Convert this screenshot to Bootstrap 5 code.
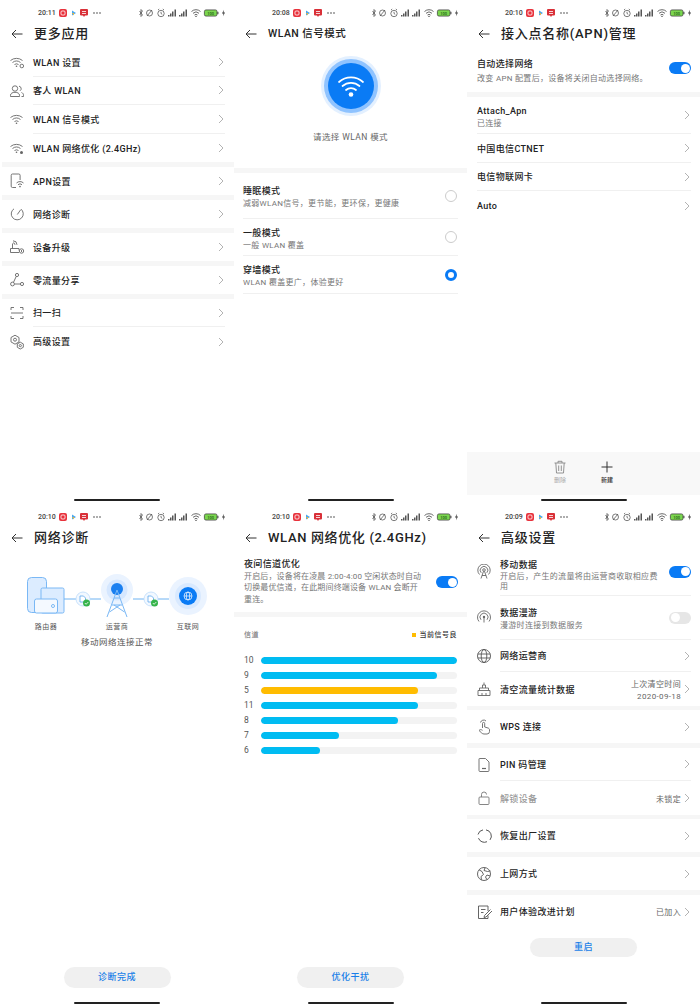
<!DOCTYPE html>
<html lang="zh-CN">
<head>
  <meta charset="UTF-8">
  <meta name="viewport" content="width=device-width, initial-scale=1">
  <title>路由器设置截图</title>
  <link href="https://cdn.jsdelivr.net/npm/bootstrap@5.3.0/dist/css/bootstrap.min.css" rel="stylesheet">
  <style>
    html, body {
      margin: 0;
      background: #fff;
      overflow: hidden;
    }
    body {
      font-family: Roboto, "Noto Sans CJK SC", sans-serif;
      color: #222;
    }
    .wall {
      display: grid;
      grid-template-columns: 234px 233px 233px;
      grid-template-rows: 504px 503px;
      width: 700px;
    }
    .screen {
      display: flex;
      flex-direction: column;
      min-width: 0;
      overflow: hidden;
      background: #fff;
    }
    /* status bar */
    .status-strip {
      display: flex;
      align-items: center;
      flex: none;
      height: 24px;
      padding: 2px 7px 0 38px;
      font-size: 7px;
      font-weight: 500;
      color: #444;
    }
    .st-left { width: 45px; height: 10px; margin-left: 3px; }
    .st-right { width: 90px; height: 10px; margin-left: auto; }
    /* header */
    .head-strip {
      display: flex;
      align-items: center;
      flex: none;
      height: 20px;
      padding-left: 11px;
    }
    .back-ico { width: 12px; height: 10px; margin-right: 11px; flex: none; }
    .head-title {
      font-size: 13px;
      font-weight: 500;
      letter-spacing: .75px;
      line-height: 20px;
      white-space: nowrap;
    }
    .head-small { font-size: 10.5px; letter-spacing: .45px; }
    .head-mid { font-size: 13px; letter-spacing: .65px; }
    /* rows */
    .gap-band { flex: none; height: 5px; background: #f6f6f6; }
    .gap-thin { height: 4px; }
    .gap-band-first { margin-left: 2px; }
    .tool-row {
      display: flex;
      align-items: center;
      flex: none;
      height: 28px;
      font-size: 9px;
      letter-spacing: .35px;
      font-weight: 500;
    }
    .tool-ico { width: 16px; height: 16px; margin: 0 8px 0 9px; flex: none; }
    .tool-body {
      display: flex;
      align-items: center;
      flex: 1;
      height: 100%;
      min-width: 0;
      margin-right: 9px;
      padding-top: 3px;
    }
    .tool-line { border-bottom: 1px solid #f0f0f0; }
    .tool-plain .tool-body { margin-left: 10px; }
    .mode-row .tool-body { margin-left: 9px; }
    .chev { width: 6px; height: 10px; margin-left: auto; margin-right: 1px; margin-top: -3px; flex: none; }
    .tool-note {
      margin-left: auto;
      margin-right: 3px;
      font-size: 8px;
      font-weight: 400;
      color: #666;
      text-align: right;
      line-height: 12px;
    }
    .tool-note + .chev { margin-left: 0; }
    .off-text { color: #999; }
    .sub-text {
      font-size: 8px;
      font-weight: 400;
      letter-spacing: .3px;
      line-height: 11px;
      color: #777;
    }
    .sub-night { letter-spacing: .15px; line-height: 11.5px; }
    .sub-drop { margin-top: 2px; }
    .text-drop { margin-top: 3px; }
    .text-drop-more { margin-top: 5px; }
    .sub-tight { line-height: 10px; }
    .name-text { line-height: 13px; }
    .h-28-5 { height: 28.5px; }
    .h-29 { height: 29px; }
    .h-32 { height: 32px; }
    .h-33 { height: 33px; }
    .h-34 { height: 34px; }
    .h-37 { height: 37px; }
    .h-38 { height: 38px; }
    .h-44 { height: 44px; }
    .h-46 { height: 46px; }
    .h-48 { height: 48px; }
    .h-64 { height: 64px; }
    .mt-4px { margin-top: 4px; }
    /* switches and radios */
    .mini-switch {
      position: relative;
      display: block;
      flex: none;
      width: 22px;
      height: 12px;
      margin-left: auto;
      margin-top: -3px;
      border-radius: 6px;
      background: #0a7bf5;
    }
    .mini-switch::after {
      content: "";
      position: absolute;
      top: 1.5px;
      right: 1.5px;
      width: 9px;
      height: 9px;
      border-radius: 50%;
      background: #fff;
    }
    .mini-switch.is-off { background: #e6e6e6; }
    .mini-switch.is-off::after { right: auto; left: 1.5px; }
    .switch-low { margin-top: 1px; }
    .mini-radio {
      display: block;
      flex: none;
      width: 12px;
      height: 12px;
      margin-left: auto;
      margin-right: 1px;
      margin-top: -3px;
      border: 1px solid #ccc;
      border-radius: 50%;
    }
    .mini-radio.is-on { border: 3px solid #0a7bf5; }
    /* wlan mode */
    .mode-hero { width: 60px; height: 60px; margin: 12px auto 0; flex: none; }
    .mode-hint {
      margin: 15px 0 25px;
      font-size: 8.5px;
      line-height: 12px;
      letter-spacing: .4px;
      text-align: center;
      color: #666;
    }
    /* diagnosis */
    .diag-art { display: block; width: 233px; height: 50px; margin-top: 22px; flex: none; }
    .diag-labels {
      display: flex;
      justify-content: center;
      margin-top: 1px;
      font-size: 7px;
      line-height: 12px;
      letter-spacing: .5px;
      color: #555;
      text-align: center;
    }
    .diag-labels span { width: 71px; }
    .diag-state {
      margin-top: 3px;
      font-size: 8.5px;
      line-height: 12px;
      letter-spacing: .5px;
      text-align: center;
      color: #555;
    }
    /* channel chart */
    .chart-top {
      display: flex;
      align-items: center;
      justify-content: space-between;
      height: 12px;
      margin: 12px 10px 11.5px;
      font-size: 7px;
      letter-spacing: .5px;
      color: #666;
    }
    .legend-dot { display: inline-block; width: 4px; height: 4px; margin-right: 4px; background: #ffbc00; }
    .legend-name { color: #333; font-weight: 500; }
    .chan-row { display: flex; align-items: center; height: 15px; padding: 0 10px; font-size: 8.5px; color: #555; }
    .chan-num { flex: none; width: 17px; }
    .chan-track { flex: 1; height: 7px; border-radius: 4px; background: #f3f3f3; }
    .chan-fill { border-radius: 4px; background: #00bcf2; }
    .chan-fill.is-now { background: #ffbc00; }
    /* bottom bits */
    .pill-btn {
      display: block;
      flex: none;
      width: 107px;
      height: 21px;
      margin: auto auto 0;
      padding: 0;
      border: 0;
      background: #f0f0f0;
      color: #1a7fe8;
      font-size: 9px;
      font-weight: 500;
      letter-spacing: .5px;
      line-height: 21px;
    }
    .pill-btn-gap { margin-bottom: 14px; }
    .pill-btn-short { height: 19px; line-height: 19px; margin-top: 10px; margin-bottom: auto; }
    .home-bar {
      flex: none;
      width: 86px;
      height: 2px;
      margin: 0 auto 3px;
      border-radius: 1px;
      background: #222;
    }
    .home-bar-end { margin-top: auto; }
    .apn-tools {
      display: flex;
      justify-content: center;
      flex: none;
      gap: 33px;
      height: 43px;
      margin-top: auto;
      margin-bottom: 4px;
      padding-top: 8px;
      background: #f8f8f8;
      font-size: 6px;
      line-height: 9px;
      text-align: center;
      color: #aaa;
    }
    .apn-tools svg { display: block; width: 14px; height: 14px; margin: 0 auto 1px; }
    .apn-new { color: #333; font-weight: 500; }
  </style>
</head>
<body>
  <!-- shared icons -->
  <svg class="d-none" xmlns="http://www.w3.org/2000/svg">
    <symbol id="st-l" viewBox="0 0 45 10">
      <rect x="0" y="1" width="8" height="8" rx="2" fill="#e8323c"/>
      <rect x="2" y="3" width="4" height="4" rx="1" fill="none" stroke="#fff" stroke-width=".8"/>
      <path d="M13 2.5v5l4-2.5z" fill="#4aa8ee"/>
      <path d="M13 5h2v2.5z" fill="#f2b632"/>
      <path d="M22 1h6a1 1 0 0 1 1 1v4.500a1 1 0 0 1-1 1h-2l-1 1.500-1-1.500h-2a1 1 0 0 1-1-1V2a1 1 0 0 1 1-1z" fill="#d93038"/>
      <path d="M23 3.500h4M23 5.500h4" stroke="#fff" stroke-width=".8"/>
      <circle cx="35" cy="5" r=".8" fill="#444"/><circle cx="38" cy="5" r=".8" fill="#444"/><circle cx="41" cy="5" r=".8" fill="#444"/>
    </symbol>
    <symbol id="st-r" viewBox="0 0 90 10">
      <g fill="none" stroke="#444" stroke-width=".7">
        <path d="M2.500 3l3 4-1.500 1.500V1.500L5.500 3l-3 4"/>
        <circle cx="12.500" cy="5" r="3"/><path d="M10 8l5-6"/>
        <circle cx="24" cy="5.500" r="3.200"/><path d="M24 3.800v1.700l1.200.8M21 2l1.200-1M27 2l-1.200-1"/>
      </g>
      <path d="M31 8.500h1.500V7H31zM33 8.500h1.500V5.500H33zM35 8.500h1.500V3.500H35zM37.500 8.500H39V1.500h-1.500z" fill="#555"/>
      <path d="M42 8.500h1.500V7H42zM44 8.500h1.500V5.500H44zM46 8.500h1.500V3.500H46zM48.500 8.500H50V1.500h-1.500z" fill="#555"/>
      <g fill="none" stroke="#444" stroke-width=".8">
        <path d="M54.500 3.500a6.500 6.500 0 0 1 9 0M56 5.300a4.300 4.300 0 0 1 6 0M57.500 7a2.200 2.200 0 0 1 3 0"/>
      </g>
      <circle cx="59" cy="8.400" r=".7" fill="#444"/>
      <rect x="67.400" y="1.900" width="12.600" height="6.200" rx="1.600" fill="#7bd64f" stroke="#333" stroke-width=".7"/>
      <rect x="80.400" y="3.800" width="1" height="2.400" fill="#333"/>
      <text x="73.700" y="6.500" font-size="4" text-anchor="middle" fill="#1d5a12" font-family="Roboto, sans-serif">100</text>
      <path d="M87 1.800l-2 3.600h1.500l-.5 2.800 2-3.600h-1.500z" fill="#333"/>
    </symbol>
    <symbol id="i-back" viewBox="0 0 12 10">
      <path d="M11.500 5H1M5 1L1 5l4 4" fill="none" stroke="#333" stroke-width="1"/>
    </symbol>
    <symbol id="i-chev" viewBox="0 0 6 10">
      <path d="M1 1l4 4-4 4" fill="none" stroke="#aaa" stroke-width=".9"/>
    </symbol>
    <g id="wifi-arcs" fill="none" stroke="#666" stroke-width=".9">
      <path d="M1.500 6.500a9.500 9.500 0 0 1 12 0M3.500 8.500a6.500 6.500 0 0 1 8 0M5.500 10.500a3.500 3.500 0 0 1 4 0"/>
    </g>
    <symbol id="i-wifi-gear" viewBox="0 0 16 16">
      <use href="#wifi-arcs"/><circle cx="7.500" cy="12.200" r=".8" fill="#666"/><circle cx="12.800" cy="12" r="1.800" fill="#fff" stroke="#666" stroke-width=".9"/>
    </symbol>
    <symbol id="i-people" viewBox="0 0 16 16">
      <g fill="none" stroke="#666" stroke-width=".9">
        <circle cx="6" cy="5.500" r="2.700"/><path d="M1.500 13.500v-1.200c0-2 2-3 4.500-3s4.500 1 4.500 3v1.200z"/>
        <path d="M10 3.200a2.500 2.500 0 0 1 1 4.600M12.500 9.500c1.300.5 2 1.400 2 2.800v1.200h-2"/>
      </g>
    </symbol>
    <symbol id="i-wifi" viewBox="0 0 16 16">
      <use href="#wifi-arcs"/><circle cx="7.500" cy="12.200" r=".8" fill="#666"/>
    </symbol>
    <symbol id="i-wifi-opt" viewBox="0 0 16 16">
      <use href="#wifi-arcs"/><circle cx="7.500" cy="12.200" r=".8" fill="#666"/><circle cx="12.500" cy="12.500" r="1.500" fill="#666"/>
    </symbol>
    <symbol id="i-apn" viewBox="0 0 16 16">
      <g fill="none" stroke="#666" stroke-width=".9">
        <path d="M7 14.500H3.500a1.300 1.300 0 0 1-1.300-1.300V2.300A1.300 1.300 0 0 1 3.500 1h6.300a1.300 1.300 0 0 1 1.300 1.300V7"/>
        <path d="M7.500 10a5 5 0 0 1 7 0M9 11.700a3 3 0 0 1 4 0"/>
      </g>
      <circle cx="11" cy="13.600" r=".8" fill="#666"/>
    </symbol>
    <symbol id="i-diag" viewBox="0 0 16 16">
      <path d="M5 2.800a6 6 0 1 0 6.800.2M8.300 8.500L11.500 4" fill="none" stroke="#666" stroke-width=".9"/>
    </symbol>
    <symbol id="i-upgrade" viewBox="0 0 16 16">
      <g fill="none" stroke="#666" stroke-width=".9">
        <path d="M10 11.500V9.500H1.500v4H10M3.500 9.500V4.500"/><path d="M4 1.800a4 4 0 0 1 4 4M4 3.800a2 2 0 0 1 2 2"/>
        <circle cx="12.500" cy="12" r="2.200"/><path d="M12.500 13V11"/>
      </g>
    </symbol>
    <symbol id="i-share" viewBox="0 0 16 16">
      <g fill="none" stroke="#666" stroke-width=".9">
        <circle cx="8" cy="3" r="1.600"/><circle cx="3.500" cy="12" r="1.900"/><circle cx="13" cy="12" r="1.600"/>
        <path d="M7.200 4.500L4.500 10.300M5.500 12h6"/>
      </g>
    </symbol>
    <symbol id="i-scan" viewBox="0 0 16 16">
      <path d="M2 5V2.500h3M11 2.500h3V5M2 11v2.500h3M11 13.500h3V11M2 8h12" fill="none" stroke="#666" stroke-width=".9"/>
    </symbol>
    <symbol id="i-gears" viewBox="0 0 16 16">
      <g fill="none" stroke="#666" stroke-width=".9">
        <path d="M6 1.200l4 2.300v4.400l-4 2.300-4-2.300V3.500z"/><circle cx="6" cy="5.700" r="1.500"/>
        <path d="M11.300 8.200l3 1.700v3.400l-3 1.700-3-1.700V9.900z"/><circle cx="11.300" cy="11.600" r="1.100"/>
      </g>
    </symbol>
    <symbol id="i-antenna" viewBox="0 0 16 16">
      <g fill="none" stroke="#666" stroke-width=".9">
        <path d="M3.500 10.500a6.200 6.200 0 1 1 9 0M5.200 8.800a3.800 3.800 0 1 1 5.600 0"/>
        <circle cx="8" cy="6" r="1.300"/><path d="M7.500 7.300L5 14.500M8.500 7.300l2.500 7.200M6 11.500h4"/>
      </g>
    </symbol>
    <symbol id="i-roam" viewBox="0 0 16 16">
      <g fill="none" stroke="#666" stroke-width=".9">
        <path d="M3 11.500a6.500 6.500 0 1 1 10 0M5 9.800a4 4 0 1 1 6 0"/>
        <path d="M8 8v4.500"/>
      </g>
      <circle cx="8" cy="7" r="1.200" fill="#666"/>
    </symbol>
    <symbol id="i-globe" viewBox="0 0 16 16">
      <g fill="none" stroke="#555" stroke-width=".9">
        <circle cx="8" cy="8" r="6.500"/><ellipse cx="8" cy="8" rx="2.800" ry="6.500"/><path d="M1.800 6h12.400M1.800 10h12.400"/>
      </g>
    </symbol>
    <symbol id="i-brush" viewBox="0 0 16 16">
      <g fill="none" stroke="#666" stroke-width=".9">
        <path d="M2 14.500V9.500h12v5zM3.500 9.500V7h9v2.500M6.500 7V4h3v3M8 4V1.500M6 14.500v-2.500M10 14.500v-2.500"/>
      </g>
    </symbol>
    <symbol id="i-hand" viewBox="0 0 16 16">
      <g fill="none" stroke="#666" stroke-width=".9">
        <path d="M6.500 9V4.500a1.100 1.100 0 0 1 2.200 0V8l3.300 1c1 .3 1.500 1 1.500 2v1.500a2.500 2.500 0 0 1-2.500 2.500H8a3 3 0 0 1-2.300-1L3 11.500c1-1.200 2.300-1 3.500-.2"/>
        <path d="M4.500 3.500a3.300 3.300 0 0 1 5.500-1.500"/>
      </g>
    </symbol>
    <symbol id="i-sim" viewBox="0 0 16 16">
      <g fill="none" stroke="#666" stroke-width=".9">
        <path d="M3.500 1.500h6L13 5v8.500a1 1 0 0 1-1 1H4a1 1 0 0 1-1-1V2a.5.500 0 0 1 .5-.5z"/>
        <path d="M6 11.500h4" stroke-width="1.200"/>
      </g>
    </symbol>
    <symbol id="i-lock" viewBox="0 0 16 16">
      <g fill="none" stroke="#777" stroke-width=".9">
        <rect x="3" y="7" width="10" height="7.500" rx="1"/><path d="M5.500 7V4.500a2.500 2.500 0 0 1 5 0"/>
      </g>
    </symbol>
    <symbol id="i-restore" viewBox="0 0 16 16">
      <g fill="none" stroke="#555" stroke-width="1">
        <path d="M2 6.500a6.200 6.200 0 0 1 5-4.600M10 1.900a6.200 6.200 0 0 1 4 10M11 13.700a6.200 6.200 0 0 1-8.500-3.500"/>
      </g>
    </symbol>
    <symbol id="i-earth" viewBox="0 0 16 16">
      <g fill="none" stroke="#555" stroke-width=".9">
        <circle cx="8" cy="8" r="6.500"/><path d="M3 3.800l3 1.700 1.500 3-2.500 2 .5 3.300M9 1.800l-1 2.700 3.500 1 2.900-.6M14 10l-3-1-1.500 2 1.500 2.800"/>
      </g>
    </symbol>
    <symbol id="i-note" viewBox="0 0 16 16">
      <g fill="none" stroke="#555" stroke-width=".9">
        <path d="M12 7V2H2.500v12.500H12V11.500"/><path d="M5 5.500h4.500M5 8.500h2.500"/><path d="M14.500 5.500L8.500 11.500l-.5 2 2-.5 6-6"/>
      </g>
    </symbol>
    <symbol id="i-trash" viewBox="0 0 14 14">
      <path d="M1.500 3h11M5 3V1.300h4V3M2.800 3l.7 10h7l.7-10M5.700 5.500v5.500M8.300 5.500v5.500" fill="none" stroke="#888" stroke-width=".9"/>
    </symbol>
    <symbol id="i-plus" viewBox="0 0 14 14">
      <path d="M7 1.500v11M1.500 7h11" fill="none" stroke="#333" stroke-width="1"/>
    </symbol>
  </svg>

  <div class="wall">

    <!-- 更多应用 -->
    <section class="screen">
      <div class="status-strip"><span>20:11</span><svg class="st-left"><use href="#st-l"/></svg><svg class="st-right"><use href="#st-r"/></svg></div>
      <div class="head-strip"><svg class="back-ico"><use href="#i-back"/></svg><span class="head-title">更多应用</span></div>
      <div class="tool-row h-28-5 mt-4px"><svg class="tool-ico"><use href="#i-wifi-gear"/></svg><div class="tool-body tool-line">WLAN 设置<svg class="chev"><use href="#i-chev"/></svg></div></div>
      <div class="tool-row h-28-5"><svg class="tool-ico"><use href="#i-people"/></svg><div class="tool-body tool-line">客人 WLAN<svg class="chev"><use href="#i-chev"/></svg></div></div>
      <div class="tool-row h-28-5"><svg class="tool-ico"><use href="#i-wifi"/></svg><div class="tool-body tool-line">WLAN 信号模式<svg class="chev"><use href="#i-chev"/></svg></div></div>
      <div class="tool-row h-28-5"><svg class="tool-ico"><use href="#i-wifi-opt"/></svg><div class="tool-body">WLAN 网络优化 (2.4GHz)<svg class="chev"><use href="#i-chev"/></svg></div></div>
      <div class="gap-band gap-band-first"></div>
      <div class="tool-row"><svg class="tool-ico"><use href="#i-apn"/></svg><div class="tool-body">APN设置<svg class="chev"><use href="#i-chev"/></svg></div></div>
      <div class="gap-band gap-band-first"></div>
      <div class="tool-row"><svg class="tool-ico"><use href="#i-diag"/></svg><div class="tool-body">网络诊断<svg class="chev"><use href="#i-chev"/></svg></div></div>
      <div class="gap-band gap-band-first"></div>
      <div class="tool-row"><svg class="tool-ico"><use href="#i-upgrade"/></svg><div class="tool-body">设备升级<svg class="chev"><use href="#i-chev"/></svg></div></div>
      <div class="gap-band gap-band-first"></div>
      <div class="tool-row"><svg class="tool-ico"><use href="#i-share"/></svg><div class="tool-body">零流量分享<svg class="chev"><use href="#i-chev"/></svg></div></div>
      <div class="gap-band gap-band-first"></div>
      <div class="tool-row"><svg class="tool-ico"><use href="#i-scan"/></svg><div class="tool-body tool-line">扫一扫<svg class="chev"><use href="#i-chev"/></svg></div></div>
      <div class="tool-row h-29"><svg class="tool-ico"><use href="#i-gears"/></svg><div class="tool-body">高级设置<svg class="chev"><use href="#i-chev"/></svg></div></div>
      <div class="home-bar home-bar-end"></div>
    </section>

    <!-- WLAN 信号模式 -->
    <section class="screen">
      <div class="status-strip"><span>20:08</span><svg class="st-left"><use href="#st-l"/></svg><svg class="st-right"><use href="#st-r"/></svg></div>
      <div class="head-strip"><svg class="back-ico"><use href="#i-back"/></svg><span class="head-title head-small">WLAN 信号模式</span></div>
      <svg class="mode-hero" viewBox="0 0 60 60">
        <circle cx="30" cy="30" r="30" fill="#e3f0ff"/>
        <circle cx="30" cy="30" r="27" fill="#8fc3ff"/>
        <circle cx="30" cy="30" r="23" fill="#0a7bf5"/>
        <g fill="none" stroke="#fff" stroke-width="1.700" stroke-linecap="round">
          <path d="M18 26a18 18 0 0 1 24 0M21.500 30a13 13 0 0 1 17 0M25 34a7.500 7.500 0 0 1 10 0"/>
        </g>
        <circle cx="30" cy="38.500" r="2.300" fill="#fff"/>
      </svg>
      <div class="mode-hint">请选择 WLAN 模式</div>
      <div class="gap-band"></div>
      <div class="tool-row tool-plain mode-row h-46"><div class="tool-body tool-line"><div><div class="name-text">睡眠模式</div><div class="sub-text">减弱WLAN信号，更节能，更环保，更健康</div></div><span class="mini-radio"></span></div></div>
      <div class="tool-row tool-plain mode-row h-37"><div class="tool-body tool-line"><div><div class="name-text">一般模式</div><div class="sub-text">一般 WLAN 覆盖</div></div><span class="mini-radio"></span></div></div>
      <div class="tool-row tool-plain mode-row h-38"><div class="tool-body tool-line"><div><div class="name-text">穿墙模式</div><div class="sub-text">WLAN 覆盖更广，体验更好</div></div><span class="mini-radio is-on"></span></div></div>
      <div class="home-bar home-bar-end"></div>
    </section>

    <!-- APN 管理 -->
    <section class="screen">
      <div class="status-strip"><span>20:10</span><svg class="st-left"><use href="#st-l"/></svg><svg class="st-right"><use href="#st-r"/></svg></div>
      <div class="head-strip"><svg class="back-ico"><use href="#i-back"/></svg><span class="head-title">接入点名称(APN)管理</span></div>
      <div class="tool-row tool-plain h-48"><div class="tool-body"><div class="text-drop"><div class="name-text">自动选择网络</div><div class="sub-text sub-drop">改变 APN 配置后，设备将关闭自动选择网络。</div></div><span class="mini-switch"></span></div></div>
      <div class="gap-band"></div>
      <div class="tool-row tool-plain h-37"><div class="tool-body tool-line"><div><div class="name-text">Attach_Apn</div><div class="sub-text">已连接</div></div><svg class="chev"><use href="#i-chev"/></svg></div></div>
      <div class="tool-row tool-plain h-29"><div class="tool-body tool-line">中国电信CTNET<svg class="chev"><use href="#i-chev"/></svg></div></div>
      <div class="tool-row tool-plain"><div class="tool-body tool-line">电信物联网卡<svg class="chev"><use href="#i-chev"/></svg></div></div>
      <div class="tool-row tool-plain h-29"><div class="tool-body">Auto<svg class="chev"><use href="#i-chev"/></svg></div></div>
      <div class="apn-tools">
        <div><svg><use href="#i-trash"/></svg>删除</div>
        <div class="apn-new"><svg><use href="#i-plus"/></svg>新建</div>
      </div>
      <div class="home-bar"></div>
    </section>

    <!-- 网络诊断 -->
    <section class="screen">
      <div class="status-strip"><span>20:10</span><svg class="st-left"><use href="#st-l"/></svg><svg class="st-right"><use href="#st-r"/></svg></div>
      <div class="head-strip"><svg class="back-ico"><use href="#i-back"/></svg><span class="head-title">网络诊断</span></div>
      <svg class="diag-art" viewBox="0 0 233 50">
        <g stroke="#7ab8f5" stroke-width="1" fill="#dcecff">
          <rect x="27.500" y="7.500" width="19" height="35" rx="4"/>
          <rect x="41" y="18" width="23" height="25" rx="1.500"/>
          <rect x="34.500" y="29" width="23" height="14" rx="2" fill="#f4f9ff"/>
          <circle cx="53" cy="36" r="1.500" fill="#fff"/>
        </g>
        <path d="M64 29h12M90 29h11M133 29h11M158 29h11" stroke="#6fb3f2" stroke-width="1"/>
        <circle cx="83" cy="29" r="7" fill="#f2f8ff" stroke="#bcdcfb" stroke-width=".8"/>
        <path d="M80 26h3.500l2 2v4h-5.500z" fill="#fff" stroke="#5fa8ee" stroke-width=".8"/>
        <circle cx="86.500" cy="33" r="3.500" fill="#35b34a"/>
        <path d="M84.800 33l1.300 1.300 2.200-2.300" fill="none" stroke="#fff" stroke-width=".8"/>
        <circle cx="151" cy="29" r="7" fill="#f2f8ff" stroke="#bcdcfb" stroke-width=".8"/>
        <path d="M148 26h3.500l2 2v4H148z" fill="#fff" stroke="#5fa8ee" stroke-width=".8"/>
        <circle cx="154.500" cy="33" r="3.500" fill="#35b34a"/>
        <path d="M152.800 33l1.300 1.300 2.200-2.300" fill="none" stroke="#fff" stroke-width=".8"/>
        <circle cx="117" cy="20" r="16" fill="#eaf3ff"/>
        <circle cx="117" cy="20" r="10.500" fill="#d5e7ff"/>
        <circle cx="117" cy="19" r="6" fill="#1a7ff0"/>
        <path d="M117 20L107 47M117 20l10 27M114 28h6M112 35h10M109.500 42L120 35M124.500 42L114 35" fill="none" stroke="#7ab8f5" stroke-width="1"/>
        <circle cx="188" cy="26" r="19" fill="#eaf3ff"/>
        <circle cx="188" cy="26" r="13" fill="#d8e9ff"/>
        <circle cx="188" cy="26" r="9" fill="#0a7bf5"/>
        <g fill="none" stroke="#fff" stroke-width=".7">
          <circle cx="188" cy="26" r="4"/><ellipse cx="188" cy="26" rx="1.700" ry="4"/><path d="M184 26h8"/>
        </g>
      </svg>
      <div class="diag-labels"><span>路由器</span><span>运营商</span><span>互联网</span></div>
      <div class="diag-state">移动网络连接正常</div>
      <button type="button" class="btn rounded-pill pill-btn pill-btn-gap">诊断完成</button>
      <div class="home-bar"></div>
    </section>

    <!-- WLAN 网络优化 -->
    <section class="screen">
      <div class="status-strip"><span>20:10</span><svg class="st-left"><use href="#st-l"/></svg><svg class="st-right"><use href="#st-r"/></svg></div>
      <div class="head-strip"><svg class="back-ico"><use href="#i-back"/></svg><span class="head-title head-mid">WLAN 网络优化 (2.4GHz)</span></div>
      <div class="tool-row tool-plain h-64">
        <div class="tool-body"><div><div class="name-text">夜间信道优化</div><div class="sub-text sub-night">开启后，设备将在凌晨 2:00-4:00 空闲状态时自动<br>切换最优信道，在此期间终端设备 WLAN 会断开<br>重连。</div></div><span class="mini-switch switch-low"></span></div>
      </div>
      <div class="gap-band"></div>
      <div class="chart-top"><span>信道</span><span class="legend-name"><i class="legend-dot"></i>当前信号良</span></div>
      <div class="chan-row"><span class="chan-num">10</span><div class="progress chan-track"><div class="progress-bar chan-fill" style="width: 100%"></div></div></div>
      <div class="chan-row"><span class="chan-num">9</span><div class="progress chan-track"><div class="progress-bar chan-fill" style="width: 90%"></div></div></div>
      <div class="chan-row"><span class="chan-num">5</span><div class="progress chan-track"><div class="progress-bar chan-fill is-now" style="width: 80%"></div></div></div>
      <div class="chan-row"><span class="chan-num">11</span><div class="progress chan-track"><div class="progress-bar chan-fill" style="width: 80%"></div></div></div>
      <div class="chan-row"><span class="chan-num">8</span><div class="progress chan-track"><div class="progress-bar chan-fill" style="width: 70%"></div></div></div>
      <div class="chan-row"><span class="chan-num">7</span><div class="progress chan-track"><div class="progress-bar chan-fill" style="width: 40%"></div></div></div>
      <div class="chan-row"><span class="chan-num">6</span><div class="progress chan-track"><div class="progress-bar chan-fill" style="width: 30%"></div></div></div>
      <button type="button" class="btn rounded-pill pill-btn pill-btn-gap">优化干扰</button>
      <div class="home-bar"></div>
    </section>

    <!-- 高级设置 -->
    <section class="screen">
      <div class="status-strip"><span>20:09</span><svg class="st-left"><use href="#st-l"/></svg><svg class="st-right"><use href="#st-r"/></svg></div>
      <div class="head-strip"><svg class="back-ico"><use href="#i-back"/></svg><span class="head-title">高级设置</span></div>
      <div class="tool-row h-48"><svg class="tool-ico"><use href="#i-antenna"/></svg><div class="tool-body tool-line"><div class="text-drop-more"><div class="name-text">移动数据</div><div class="sub-text sub-tight">开启后，产生的流量将由运营商收取相应费<br>用</div></div><span class="mini-switch"></span></div></div>
      <div class="tool-row h-44"><svg class="tool-ico"><use href="#i-roam"/></svg><div class="tool-body tool-line"><div><div class="name-text">数据漫游</div><div class="sub-text">漫游时连接到数据服务</div></div><span class="mini-switch is-off"></span></div></div>
      <div class="tool-row h-32"><svg class="tool-ico"><use href="#i-globe"/></svg><div class="tool-body tool-line">网络运营商<svg class="chev"><use href="#i-chev"/></svg></div></div>
      <div class="tool-row h-34"><svg class="tool-ico"><use href="#i-brush"/></svg><div class="tool-body">清空流量统计数据<span class="tool-note">上次清空时间<br>2020-09-18</span><svg class="chev"><use href="#i-chev"/></svg></div></div>
      <div class="gap-band gap-thin"></div>
      <div class="tool-row h-33"><svg class="tool-ico"><use href="#i-hand"/></svg><div class="tool-body">WPS 连接<svg class="chev"><use href="#i-chev"/></svg></div></div>
      <div class="gap-band"></div>
      <div class="tool-row h-33"><svg class="tool-ico"><use href="#i-sim"/></svg><div class="tool-body tool-line">PIN 码管理<svg class="chev"><use href="#i-chev"/></svg></div></div>
      <div class="tool-row h-34"><svg class="tool-ico"><use href="#i-lock"/></svg><div class="tool-body"><span class="off-text">解锁设备</span><span class="tool-note">未锁定</span><svg class="chev"><use href="#i-chev"/></svg></div></div>
      <div class="gap-band gap-thin"></div>
      <div class="tool-row h-33"><svg class="tool-ico"><use href="#i-restore"/></svg><div class="tool-body">恢复出厂设置<svg class="chev"><use href="#i-chev"/></svg></div></div>
      <div class="gap-band"></div>
      <div class="tool-row h-33"><svg class="tool-ico"><use href="#i-earth"/></svg><div class="tool-body">上网方式<svg class="chev"><use href="#i-chev"/></svg></div></div>
      <div class="gap-band"></div>
      <div class="tool-row h-33"><svg class="tool-ico"><use href="#i-note"/></svg><div class="tool-body">用户体验改进计划<span class="tool-note">已加入</span><svg class="chev"><use href="#i-chev"/></svg></div></div>
      <button type="button" class="btn rounded-pill pill-btn pill-btn-short">重启</button>
      <div class="home-bar"></div>
    </section>

  </div>

  <script src="https://cdn.jsdelivr.net/npm/bootstrap@5.3.0/dist/js/bootstrap.bundle.min.js"></script>
</body>
</html>
